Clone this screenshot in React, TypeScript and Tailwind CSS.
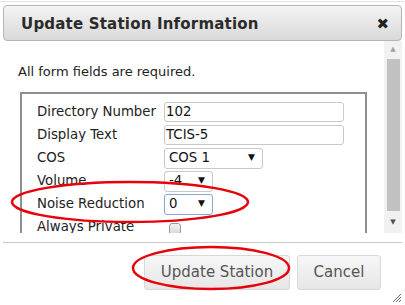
import React from 'react';

const rows = [
    { label: 'Directory Number', kind: 'text', value: '102', width: 'w-[180px]' },
    { label: 'Display Text', kind: 'text', value: 'TCIS-5', width: 'w-[180px]' },
    { label: 'COS', kind: 'select', value: 'COS 1', width: 'w-[99px]' },
    { label: 'Volume', kind: 'select', value: '-4', width: 'w-[49px]' },
    { label: 'Noise Reduction', kind: 'select', value: '0', width: 'w-[49px]', focus: true },
    { label: 'Always Private', kind: 'check', value: '', width: '' },
];

const App: React.FC = () => {
    return (
        <div className="relative w-[405px] h-[305px] overflow-hidden bg-white text-[#333] font-['DejaVu_Sans',Verdana,sans-serif]">
            <div className="h-px bg-[#e4e4e4] mt-[1px]"></div>

            {/* Title bar */}
            <div className="mx-[3px] mt-[3px] h-[36px] flex items-center justify-between pl-[17px] pr-[12px] pt-[3px] rounded-[4px] border border-[#b5b5b5] bg-gradient-to-b from-[#f4f4f4] to-[#d9d9d9]">
                <span className="text-[15px] font-bold text-[#2b2b2b] tracking-[0.2px]">Update Station Information</span>
                <span className="text-[15px] font-bold text-[#222] leading-none">✖</span>
            </div>

            {/* Scrolling body */}
            <div className="flex h-[192px]">
                <div className="w-[382px] overflow-hidden">
                    <p className="text-[13px] mt-[24px] ml-[18px] leading-none text-[#222]">All form fields are required.</p>
                    <div className="ml-[20px] mt-[14px] w-[347px] border-2 border-[#8f8f8f] pt-[8px] pl-[15px] pb-[8px]">
                        <div className="flex flex-col gap-[3px]">
                            {rows.map((r) => (
                                <div key={r.label} className="flex items-center h-[20px]">
                                    <span className="w-[127px] text-[13.3px] text-[#222] whitespace-nowrap">{r.label}</span>
                                    {r.kind === 'text' && (
                                        <div className={`${r.width} h-[20px] border border-[#c9c9c9] rounded-[3px] pl-[1px] text-[13.3px] leading-[18px] text-[#111]`}>{r.value}</div>
                                    )}
                                    {r.kind === 'select' && (
                                        <div className={`${r.width} h-[21px] ${r.focus ? 'border-[#7fa7d8]' : 'border-[#c9c9c9]'} border rounded-[3px] pl-[4px] pr-[7px] flex items-center justify-between text-[13.3px] text-[#111]`}>
                                            <span>{r.value}</span>
                                            <span className="text-[9px] text-[#111]">▼</span>
                                        </div>
                                    )}
                                    {r.kind === 'check' && (
                                        <div className="ml-[5px] mt-[4px] w-[12px] h-[12px] border border-[#9a9a9a] rounded-[3px] bg-gradient-to-b from-[#f3f3f3] to-[#d8d8d8]"></div>
                                    )}
                                </div>
                            ))}
                        </div>
                    </div>
                </div>
                {/* Scrollbar */}
                <div className="w-[18px] ml-[2px] bg-[#f1f1f1] flex flex-col items-center">
                    <span className="text-[7px] text-[#a3a3a3] mt-[5px] leading-none">▲</span>
                    <div className="w-[13px] h-[152px] mt-[6px] bg-[#c1c1c1]"></div>
                    <span className="text-[7px] text-[#505050] mt-auto mb-[7px] leading-none">▼</span>
                </div>
            </div>

            {/* Footer */}
            <div className="mx-[3px] mt-[9px] border-t border-[#c8c8c8]"></div>
            <div className="flex justify-end gap-[7px] pr-[24px] mt-[12px]">
                <button className="w-[146px] h-[35px] rounded-[3px] border border-[#d8d8d8] bg-gradient-to-b from-[#f7f7f7] to-[#e6e6e6] text-[15px] text-[#555]">Update Station</button>
                <button className="w-[84px] h-[35px] rounded-[3px] border border-[#d8d8d8] bg-gradient-to-b from-[#f7f7f7] to-[#e6e6e6] text-[15px] text-[#555]">Cancel</button>
            </div>

            {/* Resize grip */}
            <svg className="absolute right-[3px] bottom-[2px]" width="10" height="10" viewBox="0 0 10 10">
                <path d="M9 1 L1 9 M9 4 L4 9 M9 7 L7 9" stroke="#666" strokeWidth="1" />
            </svg>

            {/* Red annotation ellipses */}
            <svg className="absolute inset-0 pointer-events-none" width="405" height="305">
                <ellipse cx="130" cy="202" rx="118" ry="20" fill="none" stroke="#e8000b" strokeWidth="2.5" />
                <ellipse cx="211" cy="268" rx="78" ry="21" fill="none" stroke="#e8000b" strokeWidth="2.5" />
            </svg>
        </div>
    );
};

export default App;
